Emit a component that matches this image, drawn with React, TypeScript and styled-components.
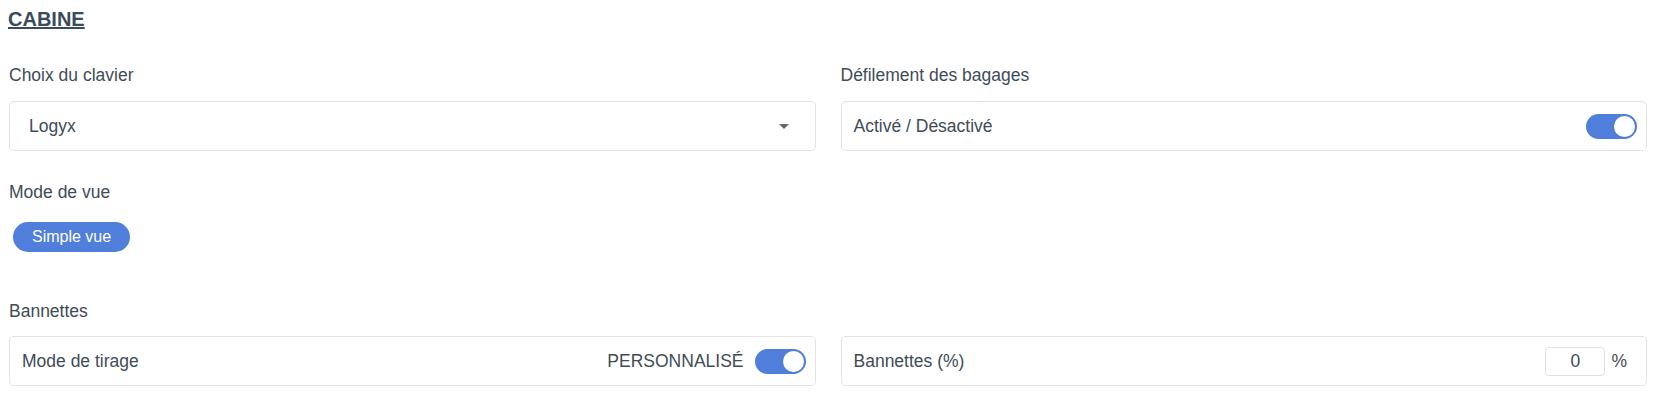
import styled, { createGlobalStyle } from 'styled-components'

const GlobalStyle = createGlobalStyle`
	body {
		margin: 0;
		background: #ffffff;
		font-family: "Liberation Sans", Arial, sans-serif;
		color: #3e4953;
	}
`

const Page = styled.div`
	padding: 7px 12px 0 9px;
`

const Title = styled.h2`
	margin: 0 0 34px -1px;
	font-size: 20px;
	line-height: 24px;
	font-weight: 700;
	color: #3a4b5b;
	text-decoration: underline;
	text-decoration-thickness: 2px;
	text-underline-offset: 1px;
`

const Grid = styled.div`
	display: grid;
	grid-template-columns: 1fr 1fr;
	column-gap: 25px;
`

const Field = styled.div`
	display: flex;
	flex-direction: column;
	margin-top: ${(p) => p.$top || 0}px;
`

const Label = styled.div`
	font-size: 17.5px;
	line-height: 20px;
	color: #414c56;
	margin-bottom: ${(p) => p.$gap ?? 16}px;
`

const Card = styled.div`
	box-sizing: border-box;
	height: 50px;
	display: flex;
	align-items: center;
	justify-content: space-between;
	padding: 0 9px 0 12px;
	border: 1px solid #e3e3e3;
	border-radius: 5px;
	background: #fff;
	font-size: 17.5px;
	color: #414c56;
`

const SelectBox = styled(Card)`
	padding: 0 26px 0 19px;
	cursor: pointer;
`

const Caret = styled.span`
	width: 0;
	height: 0;
	border-left: 5.5px solid transparent;
	border-right: 5.5px solid transparent;
	border-top: 5.5px solid #666;
`

const Controls = styled.div`
	display: flex;
	align-items: center;
	gap: ${(p) => p.$gap || 11}px;
`

const Caption = styled.span`
	font-size: 17.5px;
	color: #414c56;
	text-transform: uppercase;
`

const Toggle = styled.span`
	position: relative;
	width: 51px;
	height: 25px;
	border-radius: 13px;
	background: ${(p) => (p.$on ? '#4f7edb' : '#c9ced6')};

	&::after {
		content: '';
		position: absolute;
		top: 2px;
		left: ${(p) => (p.$on ? '28px' : '2px')};
		width: 21px;
		height: 21px;
		border-radius: 50%;
		background: #fff;
	}
`

const Pill = styled.button`
	align-self: flex-start;
	margin-left: 4px;
	height: 30px;
	padding: 0 19px;
	border: none;
	border-radius: 15px;
	background: #4f7edb;
	color: #fff;
	font-family: inherit;
	font-size: 16px;
	cursor: pointer;
`

const NumberInput = styled.input`
	box-sizing: border-box;
	width: 60px;
	height: 29px;
	border: 1px solid #e0e0e0;
	border-radius: 4px;
	text-align: center;
	font-family: inherit;
	font-size: 17.5px;
	color: #414c56;
	outline: none;
`

const Suffix = styled.span`
	margin-right: 10px;
	font-size: 17.5px;
`

export default function App() {
	return (
		<>
			<GlobalStyle />
			<Page>
				<Title>CABINE</Title>

				<Grid>
					<Field>
						<Label>Choix du clavier</Label>
						<SelectBox>
							<span>Logyx</span>
							<Caret />
						</SelectBox>
					</Field>
					<Field>
						<Label>Défilement des bagages</Label>
						<Card>
							<span>Activé / Désactivé</span>
							<Toggle $on />
						</Card>
					</Field>
				</Grid>

				<Field $top={31}>
					<Label $gap={20}>Mode de vue</Label>
					<Pill>Simple vue</Pill>
				</Field>

				<Field $top={49}>
					<Label $gap={15}>Bannettes</Label>
					<Grid>
						<Card>
							<span>Mode de tirage</span>
							<Controls>
								<Caption>Personnalisé</Caption>
								<Toggle $on />
							</Controls>
						</Card>
						<Card>
							<span>Bannettes (%)</span>
							<Controls $gap={6}>
								<NumberInput type="text" defaultValue="0" />
								<Suffix>%</Suffix>
							</Controls>
						</Card>
					</Grid>
				</Field>
			</Page>
		</>
	)
}
